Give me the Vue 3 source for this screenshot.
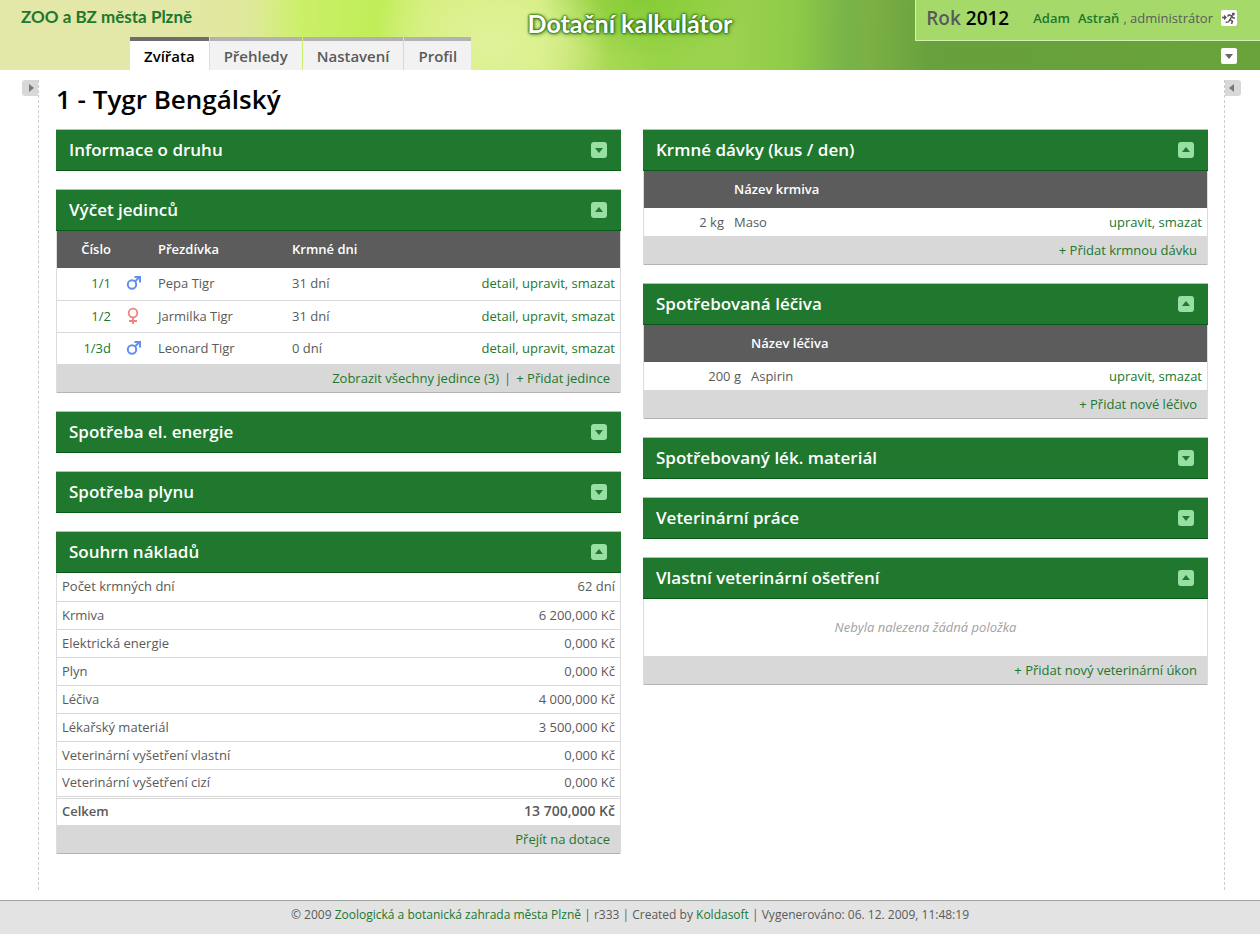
<script setup>
import { reactive } from 'vue'

const tabs = ['Zvířata', 'Přehledy', 'Nastavení', 'Profil']

const open = reactive({
  info: false,
  animals: true,
  power: false,
  gas: false,
  summary: true,
  food: true,
  drugs: true,
  material: false,
  vetWork: false,
  vetOwn: true
})

const animals = [
  { id: '1/1', sex: 'male', name: 'Pepa Tigr', days: '31 dní' },
  { id: '1/2', sex: 'female', name: 'Jarmilka Tigr', days: '31 dní' },
  { id: '1/3d', sex: 'male', name: 'Leonard Tigr', days: '0 dní' }
]

const costs = [
  ['Počet krmných dní', '62 dní'],
  ['Krmiva', '6 200,000 Kč'],
  ['Elektrická energie', '0,000 Kč'],
  ['Plyn', '0,000 Kč'],
  ['Léčiva', '4 000,000 Kč'],
  ['Lékařský materiál', '3 500,000 Kč'],
  ['Veterinární vyšetření vlastní', '0,000 Kč'],
  ['Veterinární vyšetření cizí', '0,000 Kč']
]

const columns = [
  [
    { key: 'info', title: 'Informace o druhu' },
    { key: 'animals', title: 'Výčet jedinců' },
    { key: 'power', title: 'Spotřeba el. energie' },
    { key: 'gas', title: 'Spotřeba plynu' },
    { key: 'summary', title: 'Souhrn nákladů', link: 'Přejít na dotace' }
  ],
  [
    { key: 'food', title: 'Krmné dávky (kus / den)', head: 'Název krmiva', amount: '2 kg', item: 'Maso', link: '+ Přidat krmnou dávku' },
    { key: 'drugs', title: 'Spotřebovaná léčiva', head: 'Název léčiva', amount: '200 g', item: 'Aspirin', link: '+ Přidat nové léčivo' },
    { key: 'material', title: 'Spotřebovaný lék. materiál' },
    { key: 'vetWork', title: 'Veterinární práce' },
    { key: 'vetOwn', title: 'Vlastní veterinární ošetření', link: '+ Přidat nový veterinární úkon' }
  ]
]
</script>

<template>
  <div class="page">
    <header class="top">
      <div class="left">
        <a class="brand" href="#">ZOO a BZ města Plzně</a>
        <nav class="tabs">
          <a v-for="(t, i) in tabs" :key="t" href="#" class="tab" :class="{ active: i === 0 }">{{ t }}</a>
        </nav>
      </div>
      <div class="title">Dotační kalkulátor</div>
      <div class="right">
        <div class="user">
          <span class="year">Rok <b>2012</b></span>
          <span class="who"><a href="#">Adam</a><a href="#">Astraň</a><span>, administrátor</span></span>
          <button class="square" aria-label="Odhlásit">
            <svg width="16" height="16" viewBox="0 0 16 16" fill="none" stroke="#555" stroke-width="1.3">
              <path d="M1 7.500H4.500M3 5.500L5 7.500L3 9.500" />
              <circle cx="12.300" cy="4" r="1.500" fill="#555" stroke="none" />
              <path d="M6.500 6.500L8 4.800L11 6L9 9.500L11.500 11.300L10.500 14" stroke-width="1.500" />
              <path d="M11 6L12 8L14 8M9 9.500L7.500 12L4.500 12.300" />
            </svg>
          </button>
        </div>
        <button class="square menu" aria-label="Rozbalit">
          <svg width="16" height="16" viewBox="0 0 16 16"><path d="M4 6H12L8 11Z" fill="#666" /></svg>
        </button>
      </div>
    </header>

    <div class="body">
      <aside class="side side-left">
        <button class="handle" aria-label="Levý panel">
          <svg width="16" height="16" viewBox="0 0 16 16"><path d="M7 4L12 8L7 12Z" fill="#777" /></svg>
        </button>
      </aside>
      <main>
        <h1>1 - Tygr Bengálský</h1>
        <div class="grid">
          <div v-for="(col, c) in columns" :key="c" class="col">
            <section v-for="card in col" :key="card.key" class="card">
              <div class="card-head">
                <h2>{{ card.title }}</h2>
                <button class="toggle" :aria-label="card.title" :aria-expanded="open[card.key]" @click="open[card.key] = !open[card.key]">
                  <svg width="16" height="16" viewBox="0 0 16 16">
                    <path :d="open[card.key] ? 'M4 10H12L8 5Z' : 'M4 6H12L8 11Z'" fill="#20772e" />
                  </svg>
                </button>
              </div>
              <div v-if="open[card.key]" class="card-body">
                <table v-if="card.key === 'animals'" class="animals">
                  <thead>
                    <tr><th class="id">Číslo</th><th class="sex"></th><th class="name">Přezdívka</th><th class="days">Krmné dni</th><th></th></tr>
                  </thead>
                  <tbody>
                    <tr v-for="a in animals" :key="a.id">
                      <td class="id"><a href="#">{{ a.id }}</a></td>
                      <td class="sex">
                        <svg v-if="a.sex === 'male'" width="16" height="16" viewBox="0 0 16 16" fill="none" stroke="#5f8ff0" stroke-width="2">
                          <circle cx="6" cy="9.500" r="4.200" /><path d="M9 6.500L13 2.500M8.500 2H14V7.500" />
                        </svg>
                        <svg v-else width="16" height="18" viewBox="0 0 16 18" fill="none" stroke="#f08080" stroke-width="1.800">
                          <circle cx="7" cy="6" r="4.300" /><path d="M7 10.500V17M3 14H11" />
                        </svg>
                      </td>
                      <td>{{ a.name }}</td>
                      <td>{{ a.days }}</td>
                      <td class="end"><a href="#">detail</a>, <a href="#">upravit</a>, <a href="#">smazat</a></td>
                    </tr>
                  </tbody>
                </table>
                <table v-else-if="card.key === 'summary'" class="summary">
                  <tbody>
                    <tr v-for="row in costs" :key="row[0]"><td>{{ row[0] }}</td><td class="end">{{ row[1] }}</td></tr>
                  </tbody>
                  <tfoot>
                    <tr><td>Celkem</td><td class="end total">13 700,000 Kč</td></tr>
                  </tfoot>
                </table>
                <table v-else-if="card.item" :class="card.key">
                  <thead><tr><th class="amount"></th><th>{{ card.head }}</th><th></th></tr></thead>
                  <tbody>
                    <tr>
                      <td class="amount">{{ card.amount }}</td>
                      <td>{{ card.item }}</td>
                      <td class="end"><a href="#">upravit</a>, <a href="#">smazat</a></td>
                    </tr>
                  </tbody>
                </table>
                <p v-else class="empty">Nebyla nalezena žádná položka</p>
                <div class="card-foot">
                  <template v-if="card.key === 'animals'">
                    <a href="#">Zobrazit všechny jedince (3)</a><i>|</i><a href="#">+ Přidat jedince</a>
                  </template>
                  <a v-else href="#">{{ card.link }}</a>
                </div>
              </div>
            </section>
          </div>
        </div>
      </main>
      <aside class="side side-right">
        <button class="handle" aria-label="Pravý panel">
          <svg width="16" height="16" viewBox="0 0 16 16"><path d="M9 4L4 8L9 12Z" fill="#777" /></svg>
        </button>
      </aside>
    </div>

    <footer>
      © 2009 <a href="#">Zoologická a botanická zahrada města Plzně</a> | r333 | Created by
      <a href="#">Koldasoft</a> | Vygenerováno: 06. 12. 2009, 11:48:19
    </footer>
  </div>
</template>

<style>
body {
  margin: 0;
  background: #fff;
}
</style>

<style scoped>
.page {
  min-height: 100vh;
  display: flex;
  flex-direction: column;
  font: 13px/18px "Trebuchet MS", "Open Sans", sans-serif;
  color: #5a5a5a;
}
* {
  box-sizing: border-box;
}
a {
  color: #20772e;
  text-decoration: none;
}
button {
  border: 0;
  padding: 0;
  width: 16px;
  height: 16px;
  cursor: pointer;
}
button svg {
  display: block;
}
.top {
  display: grid;
  grid-template-columns: 1fr auto 1fr;
  height: 70px;
  background:
    radial-gradient(ellipse 120px 90px at 39% 60%, #e0f29a 0%, #e0f29a00 100%),
    radial-gradient(ellipse 110px 60px at 51% 0%, #86cc36 0%, #86cc3600 100%),
    linear-gradient(92deg, #e3e7a7 0%, #e3e7a7 14%, #dfe99a 20%, #cbf068 24%, #c0ed58 30%, #d3ef78 34%, #d4ed80 43%, #aad955 48%, #98d348 52%, #9cd250 58%, #8fcb48 63%, #78b448 67%, #7cb045 69%, #67a03c 74%, #69a33a 100%);
}
.left {
  display: flex;
  flex-direction: column;
  justify-content: space-between;
}
.brand {
  padding: 6px 0 0 21px;
  font-family: Lato, sans-serif;
  font-size: 17px;
  line-height: 22px;
  font-weight: 700;
}
.tabs {
  display: flex;
  gap: 1px;
  padding-left: 130px;
}
.tab {
  height: 33px;
  padding: 0 14px;
  border-top: 4px solid #b2b2b2;
  background: #f2f2f2;
  color: #5a5a5a;
  font-size: 15px;
  line-height: 31px;
  font-weight: 600;
}
.tab.active {
  background: #fff;
  border-color: #6d6d6d;
  color: #000;
}
.title {
  padding-top: 8px;
  font-family: Lato, sans-serif;
  font-size: 25px;
  line-height: 30px;
  font-weight: 700;
  color: #fff;
  text-shadow: 0 0 2px #2b7010, 0 0 2px #2b7010, 0 0 3px #2b7010, 1px 1px 4px #3f8a1a;
}
.right {
  display: flex;
  flex-direction: column;
  align-items: flex-end;
}
.user {
  display: flex;
  align-items: center;
  height: 41px;
  padding: 0 23px 4px 10px;
  border-left: 1px solid #d6f0b4;
  border-bottom: 1px solid #d6f0b4;
  background: #a5da6a;
  white-space: nowrap;
}
.year {
  margin-right: 24px;
  font-size: 19px;
  font-weight: 600;
}
.year b {
  font-weight: 600;
  color: #000;
}
.who {
  display: flex;
  gap: 8px;
  margin-right: 8px;
  font-weight: 600;
}
.who span {
  margin-left: -4px;
  font-weight: 500;
}
.square {
  border-radius: 2px;
  background: #fff;
}
.menu {
  margin: 7px 23px 0 0;
}
.body {
  flex: 1;
  display: grid;
  grid-template-columns: 39px 1fr 36px;
}
.side {
  margin: 10px 0;
}
.side-left {
  border-right: 1px dashed #ccc;
  padding-left: 22px;
}
.side-right {
  border-left: 1px dashed #ccc;
}
.handle {
  display: block;
  background: #d8d8d8;
  border-radius: 3px 0 0 3px;
}
.side-right .handle {
  border-radius: 0 3px 3px 0;
}
main {
  padding: 0 16px 46px 17px;
}
h1 {
  margin: 0;
  font-size: 26px;
  line-height: 59px;
  font-weight: 600;
  color: #000;
}
.grid {
  display: grid;
  grid-template-columns: 1fr 1fr;
  gap: 22px;
}
.col {
  display: flex;
  flex-direction: column;
  gap: 18px;
}
.card-head {
  display: flex;
  justify-content: space-between;
  align-items: center;
  height: 42px;
  padding: 0 14px 0 13px;
  background: #20772e;
  border-top: 1px solid #8fd79c;
  border-bottom: 1px solid #075a18;
}
h2 {
  margin: 0;
  font-size: 17px;
  line-height: 24px;
  font-weight: 600;
  color: #fff;
}
.toggle {
  border-radius: 3px;
  background: #98dfa3;
}
.card-body {
  border: solid #dcdcdc;
  border-width: 0 1px;
}
table {
  width: 100%;
  border-collapse: collapse;
  table-layout: fixed;
}
th,
td {
  padding: 0 5px 1px;
  height: 28px;
  text-align: left;
}
th {
  height: 37px;
  background: #5c5c5c;
  color: #fff;
  font-weight: 600;
}
.end,
.id,
.amount {
  text-align: right;
}
.animals td {
  height: 32px;
}
.animals tr + tr td,
.summary tr + tr td {
  border-top: 1px solid #d8d8d8;
}
.id {
  width: 59px;
}
.sex {
  width: 37px;
  padding-left: 10px;
}
.sex svg {
  display: block;
}
.name {
  width: 134px;
}
.days {
  width: 120px;
}
.food .amount {
  width: 85px;
}
.drugs .amount {
  width: 102px;
}
.summary tfoot td {
  border-top: 3px double #d8d8d8;
  font-weight: 600;
}
.summary .total {
  font-size: 14px;
}
.empty {
  margin: 0;
  line-height: 57px;
  text-align: center;
  font-style: italic;
  color: #a2a2a2;
}
.card-foot {
  height: 29px;
  padding-right: 10px;
  background: #d8d8d8;
  border-bottom: 1px solid #b4b4b4;
  line-height: 28px;
  text-align: right;
}
.card-foot i {
  margin: 0 5px;
  font-style: normal;
}
footer {
  padding: 5px 0 10px;
  border-top: 1px solid #a0a69f;
  background: #e3e3e3;
  font-size: 12px;
  text-align: center;
}
footer a {
  font-weight: 500;
}
</style>
